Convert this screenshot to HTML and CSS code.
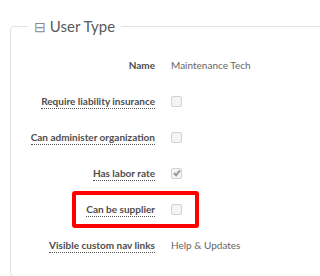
FILE: index.html
```html
<!DOCTYPE html>
<html lang="en">
<head>
    <meta charset="UTF-8">
    <title>User Type</title>
    <link rel="stylesheet" href="styles.css">
</head>
<body>
    <fieldset class="panel">
        <legend><span class="toggle">&#8863;</span> User Type</legend>

        <div class="row">
            <div class="label plain">Name</div>
            <div class="value">Maintenance Tech</div>
        </div>
        <div class="row">
            <div class="label"><span class="hint">Require liability insurance</span></div>
            <div class="value"><span class="check"></span></div>
        </div>
        <div class="row">
            <div class="label"><span class="hint">Can administer organization</span></div>
            <div class="value"><span class="check"></span></div>
        </div>
        <div class="row">
            <div class="label"><span class="hint">Has labor rate</span></div>
            <div class="value"><span class="check checked"></span></div>
        </div>
        <div class="row marked">
            <div class="label"><span class="hint">Can be supplier</span></div>
            <div class="value"><span class="check"></span></div>
        </div>
        <div class="row">
            <div class="label"><span class="hint">Visible custom nav links</span></div>
            <div class="value">Help &amp; Updates</div>
        </div>
    </fieldset>
</body>
</html>
```

FILE: styles.css
```css
body {
    margin: 0;
    font-family: Lato, "Open Sans", Arial, sans-serif;
    background: white;
    color: #555;
    overflow: hidden;
}
.panel {
    width: 330px;
    margin: 16px 0 0 10px;
    padding: 10px 0 13px 0;
    border: 1px solid #e2e2e2;
    border-radius: 4px;
    min-width: 0;
}
.panel legend {
    margin-left: 17px;
    padding: 0 6px;
    font-size: 15px;
    line-height: 20px;
    color: #5a5a5a;
}
.toggle {
    color: #8a8a8a;
    font-size: 14px;
}
.row {
    position: relative;
    display: flex;
    align-items: center;
    height: 36px;
    font-size: 10px;
}
.label {
    width: 144px;
    flex: none;
    text-align: right;
    font-weight: bold;
    color: #4d4d4d;
    white-space: nowrap;
}
.hint {
    border-bottom: 1px dotted #555;
    padding-bottom: 1px;
}
.value {
    margin-left: 16px;
    color: #666;
    display: flex;
    align-items: center;
}
.check {
    display: inline-block;
    width: 9px;
    height: 9px;
    border: 1px solid #d2d2d2;
    border-radius: 2px;
    background: #f4f4f4;
    position: relative;
}
.check.checked::after {
    content: "";
    position: absolute;
    left: 3px;
    top: 0px;
    width: 2px;
    height: 5px;
    border: solid #999;
    border-width: 0 2px 2px 0;
    transform: rotate(40deg);
}
.marked::after {
    content: "";
    position: absolute;
    left: 61px;
    top: 0;
    width: 119px;
    height: 29px;
    border: 4px solid #f00;
    border-radius: 3px;
}
```
